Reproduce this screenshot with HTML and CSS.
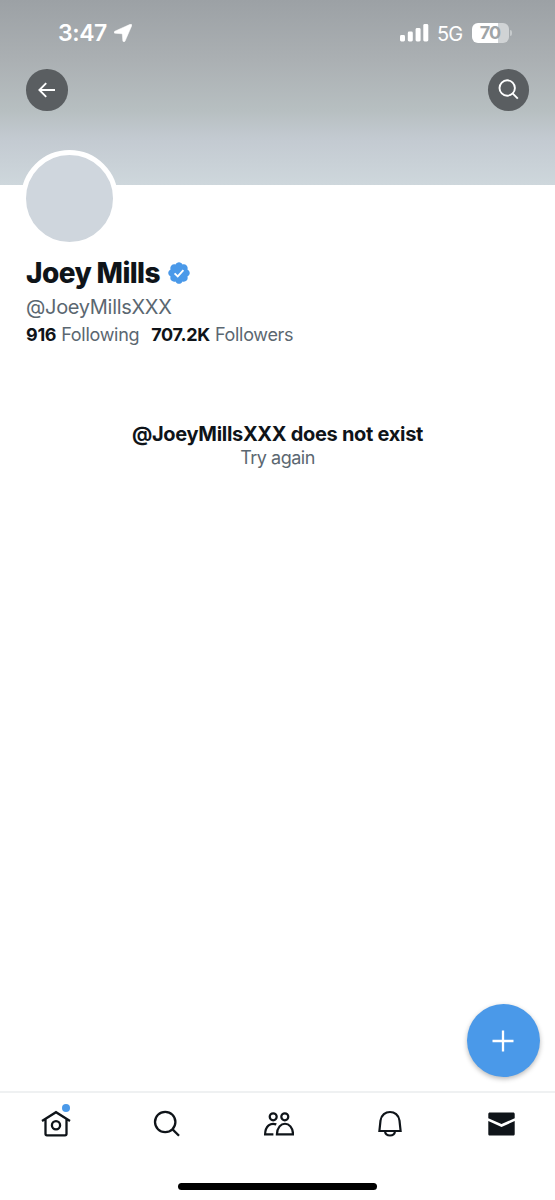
FILE: index.html
```html
<!DOCTYPE html>
<html lang="en">
<head>
    <meta charset="UTF-8">
    <meta name="viewport" content="width=device-width, initial-scale=1.0">
    <title>Joey Mills</title>
    <link rel="stylesheet" href="styles.css">
</head>
<body>

<header class="banner">
    <div class="status-bar">
        <span class="time">3:47</span>
        <svg class="location" width="18" height="18" viewBox="0 0 18 18"><path d="M16.2.3.8 7.2c-1.2.6-.9 2 .3 2.1l6.5.4c.5 0 .7.2.7.7l.5 6.3c.1 1.4 1.7 1.6 2.3.3l6.6-15.2C18.2.6 17.4-.2 16.2.3z" fill="#fff" stroke="#fff" stroke-width=".5"/></svg>
        <svg class="signal" width="29" height="18" viewBox="0 0 29 18" fill="#fff">
            <rect x="0" y="11" width="5" height="6.5" rx="1.4"/>
            <rect x="7.8" y="7.6" width="5" height="9.9" rx="1.4"/>
            <rect x="15.6" y="4" width="5" height="13.5" rx="1.4"/>
            <rect x="23.3" y="0" width="5" height="17.5" rx="1.4"/>
        </svg>
        <span class="network">5G</span>
        <span class="battery">70</span>
        <span class="battery-tip"></span>
    </div>
    <div class="banner-buttons">
        <button class="round-button" aria-label="Back">
            <svg width="18" height="16" viewBox="0 0 18 16" fill="none" stroke="#fff" stroke-width="1.9"><path d="M17 8H1.6M8.2 1.2 1.4 8l6.8 6.8"/></svg>
        </button>
        <button class="round-button" aria-label="Search">
            <svg width="21" height="21" viewBox="0 0 21 21" fill="none" stroke="#fff" stroke-width="1.9"><circle cx="9.2" cy="9" r="7.7"/><path d="m14.6 14.4 5.2 5.2"/></svg>
        </button>
    </div>
</header>

<main class="profile">
    <div class="avatar"></div>
    <h1 class="name">
        <span>Joey Mills</span>
        <svg width="22" height="22" viewBox="1.5 1.5 21 21"><path d="M22.25 12c0-1.43-.88-2.67-2.19-3.34.46-1.39.2-2.9-.81-3.91s-2.52-1.27-3.91-.81c-.66-1.31-1.91-2.19-3.34-2.19s-2.67.88-3.33 2.19c-1.4-.46-2.91-.2-3.92.81s-1.26 2.52-.8 3.91c-1.31.67-2.2 1.91-2.2 3.34s.89 2.67 2.2 3.34c-.46 1.39-.21 2.9.8 3.91s2.52 1.26 3.91.81c.67 1.31 1.91 2.19 3.34 2.19s2.68-.88 3.34-2.19c1.39.45 2.9.2 3.91-.81s1.27-2.52.81-3.91c1.31-.67 2.19-1.91 2.19-3.34z" fill="#4a99e9"/><path d="m7.8 12.3 3 3 5.4-6.1" fill="none" stroke="#fff" stroke-width="1.8"/></svg>
    </h1>
    <div class="handle">@JoeyMillsXXX</div>
    <div class="stats">
        <b class="following-count">916</b><span class="following">Following</span>
        <b class="followers-count">707.2K</b><span class="followers">Followers</span>
    </div>
    <div class="message">
        <h2>@JoeyMillsXXX does not exist</h2>
        <p>Try again</p>
    </div>
</main>

<button class="compose" aria-label="New post">
    <svg width="22" height="22" viewBox="0 0 22 22" stroke="#fff" stroke-width="2.3"><path d="M11 .5v21M.5 11h21"/></svg>
</button>

<nav class="tabs">
    <a class="tab home">
        <svg width="30" height="28" viewBox="0 0 30 28" fill="none" stroke="#0f1419" stroke-width="2.3"><path d="M1 11 15 2.2 29 11M4.5 9v14.8a1.5 1.5 0 0 0 1.5 1.5h18a1.5 1.5 0 0 0 1.5-1.5V9"/><circle cx="15" cy="15.3" r="4.1"/></svg>
        <span class="dot"></span>
    </a>
    <a class="tab">
        <svg width="28" height="28" viewBox="0 0 28 28" fill="none" stroke="#0f1419" stroke-width="2.3"><circle cx="12.2" cy="12" r="10.2"/><path d="m19.3 19.1 6.7 6.7"/></svg>
    </a>
    <a class="tab">
        <svg width="30" height="28" viewBox="0 0 30 28" fill="none" stroke="#0f1419" stroke-width="2.2"><circle cx="9.2" cy="6.8" r="3.5"/><circle cx="20.8" cy="6.8" r="3.5"/><path d="M12.3 14.4c-5.7-2.1-11 1.6-11.2 10h8.3M12.9 24.4h16.2c-.5-14.2-15.7-14.2-16.2 0z"/></svg>
    </a>
    <a class="tab">
        <svg width="26" height="28" viewBox="0 0 26 28" fill="none" stroke="#0f1419" stroke-width="2.2"><path d="M2.4 21 3.5 10.7c1.4-11.6 17.6-11.6 19 0L23.6 21zM8 21.3c.8 5.6 9.2 5.6 10 0"/></svg>
    </a>
    <a class="tab">
        <svg width="27" height="28" viewBox="0 0 27 28" fill="#0f1419"><path d="M.3 8.2V4.1c0-1 .6-1.6 1.6-1.6h23.2c1 0 1.6.6 1.6 1.6v4.1l-13.2 5.9zM.3 11l13.2 6 13.2-6v13c0 1-.6 1.6-1.6 1.6H1.9c-1 0-1.6-.6-1.6-1.6z"/></svg>
    </a>
</nav>
<div class="home-bar"></div>

</body>
</html>
```

FILE: styles.css
```css
* {
    box-sizing: border-box;
}

body {
    margin: 0;
    height: 1200px;
    display: flex;
    flex-direction: column;
    background-color: #fff;
    color: #0f1419;
    font-family: Inter, "Liberation Sans", sans-serif;
    overflow: hidden;
}

button {
    border: none;
    padding: 0;
    display: flex;
    align-items: center;
    justify-content: center;
}

.banner {
    height: 185px;
    background: linear-gradient(#9ca1a5 0%, #abb0b3 33%, #b7bfc1 60%, #c3cad1 75%, #ced7dc 100%);
}

.status-bar {
    height: 69px;
    padding: 0 43px 3px 58px;
    display: flex;
    align-items: center;
    color: #fff;
}

.time {
    width: 56px;
    font-size: 23px;
    font-weight: 600;
    letter-spacing: -0.4px;
}

.signal {
    margin-left: auto;
}

.network {
    width: 35px;
    margin-left: 8px;
    font-size: 20px;
    letter-spacing: -0.8px;
    position: relative;
    top: 1px;
}

.battery {
    width: 37px;
    height: 20px;
    padding-right: 1px;
    border-radius: 6px;
    background: linear-gradient(90deg, #fff 70%, #d0d3d5 70%);
    color: #9fa4a7;
    font-size: 18px;
    font-weight: 700;
    line-height: 20px;
    letter-spacing: -0.8px;
    text-align: center;
}

.battery-tip {
    width: 2px;
    height: 6px;
    margin-left: 1px;
    border-radius: 0 2px 2px 0;
    background-color: #c6cacc;
}

.banner-buttons {
    display: flex;
    justify-content: space-between;
    padding: 0 26px;
}

.round-button {
    width: 41.5px;
    height: 41.5px;
    border-radius: 50%;
    background-color: #5a5e61;
}

.avatar {
    width: 97px;
    height: 97px;
    margin: -35px 0 8px 21px;
    border: 5px solid #fff;
    border-radius: 50%;
    background-color: #cfd6dd;
}

.name {
    margin: 0 0 2px 26px;
    height: 36px;
    display: flex;
    align-items: center;
    gap: 8px;
    font-size: 28px;
    font-weight: 800;
    line-height: 36px;
    letter-spacing: -0.6px;
}

.handle {
    margin: 0 0 2px 26px;
    font-size: 20px;
    line-height: 28px;
    letter-spacing: -0.3px;
    color: #5b6771;
}

.stats {
    margin-left: 26px;
    display: flex;
    font-size: 18px;
    line-height: 24px;
    letter-spacing: -0.3px;
}

.stats b {
    font-weight: 700;
    margin-right: 5px;
}

.stats span {
    color: #5b6771;
}

.following {
    margin-right: 12px;
}

.message {
    margin-top: 75px;
    text-align: center;
    line-height: 24px;
}

.message h2 {
    margin: 0;
    font-size: 20px;
    font-weight: 700;
    letter-spacing: -0.3px;
}

.message p {
    margin: 0;
    font-size: 18px;
    letter-spacing: -0.5px;
    color: #5b6771;
}

.compose {
    width: 73px;
    height: 73px;
    margin: auto 15.5px 14px auto;
    border-radius: 50%;
    background-color: #4a99e9;
    box-shadow: 0 2px 5px rgba(0, 0, 0, 0.28);
}

.tabs {
    height: 92px;
    margin-right: -2px;
    padding-top: 17px;
    border-top: 2px solid #eff1f2;
    display: flex;
}

.tab {
    flex: 1;
    height: 28px;
    display: flex;
    justify-content: center;
    position: relative;
}

.dot {
    position: absolute;
    top: -6px;
    left: 62px;
    width: 8px;
    height: 8px;
    border-radius: 50%;
    background-color: #4a99e9;
}

.home-bar {
    width: 199px;
    height: 7px;
    margin: 0 auto 10px;
    border-radius: 4px;
    background-color: #000;
}
```
